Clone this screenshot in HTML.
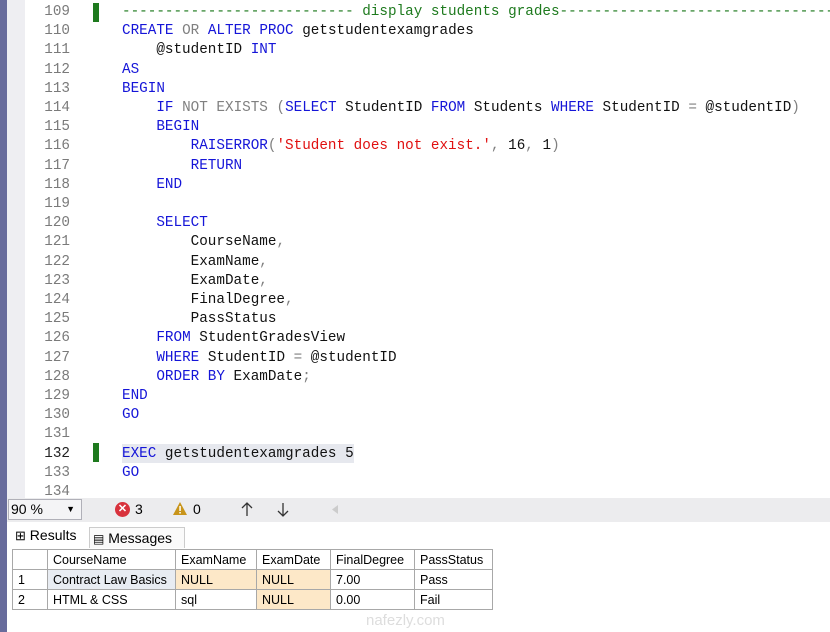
<!DOCTYPE html>
<html><head><meta charset="utf-8"><style>
*{margin:0;padding:0;box-sizing:border-box}
body{width:830px;height:632px;overflow:hidden;background:#fff;position:relative;font-family:"Liberation Sans",sans-serif}
#strip{position:absolute;left:0;top:0;width:7px;height:632px;background:#686c9c}
#gut{position:absolute;left:7px;top:0;width:18px;height:498px;background:#eeeef2}
.ln{position:absolute;left:25px;width:45px;text-align:right;font:14.3px "Liberation Mono",monospace;color:#7a7a7a;height:19px;line-height:19px}
.cd{position:absolute;left:122px;font:14.3px "Liberation Mono",monospace;color:#111;white-space:pre;height:19px;line-height:19px}
.k{color:#1515d8}.g{color:#808080}.c{color:#1e7a1e}.s{color:#e01010}
.mark{position:absolute;left:93px;width:6px;height:19px;background:#1e7a1e}
#tb{position:absolute;left:7px;top:498px;width:823px;height:24px;background:#ececee}
#zoom{position:absolute;left:8px;top:499px;width:74px;height:21px;border:1px solid #b0b0b8;background:#f4f4f6;font-size:14px;padding-left:2px;line-height:19px}
#res{position:absolute;left:7px;top:522px;width:823px;height:110px;background:#fff}
.tab{position:absolute;font-size:14px;line-height:22px}
table{position:absolute;left:12px;top:549px;border-collapse:collapse;font-size:12.5px}
td{border:1px solid #a8a8a8;height:20px;padding:0 5px;white-space:nowrap}
.y{background:#fde8c8}
</style></head><body>
<div id="strip"></div><div id="gut"></div>
<div class="mark" style="top:3px"></div>
<div class="mark" style="top:443px"></div>
<div style="position:absolute;left:122px;top:444px;width:232px;height:19px;background:#e6e8ee"></div>
<div id="code"></div>
<script>
var L=[
'<span class="c">--------------------------- display students grades----------------------------------</span>',
'<span class="k">CREATE</span> <span class="g">OR</span> <span class="k">ALTER PROC</span> getstudentexamgrades',
'    @studentID <span class="k">INT</span>',
'<span class="k">AS</span>',
'<span class="k">BEGIN</span>',
'    <span class="k">IF</span> <span class="g">NOT EXISTS (</span><span class="k">SELECT</span> StudentID <span class="k">FROM</span> Students <span class="k">WHERE</span> StudentID <span class="g">=</span> @studentID<span class="g">)</span>',
'    <span class="k">BEGIN</span>',
'        <span class="k">RAISERROR</span><span class="g">(</span><span class="s">\'Student does not exist.\'</span><span class="g">,</span> 16<span class="g">,</span> 1<span class="g">)</span>',
'        <span class="k">RETURN</span>',
'    <span class="k">END</span>',
'',
'    <span class="k">SELECT</span>',
'        CourseName<span class="g">,</span>',
'        ExamName<span class="g">,</span>',
'        ExamDate<span class="g">,</span>',
'        FinalDegree<span class="g">,</span>',
'        PassStatus',
'    <span class="k">FROM</span> StudentGradesView',
'    <span class="k">WHERE</span> StudentID <span class="g">=</span> @studentID',
'    <span class="k">ORDER BY</span> ExamDate<span class="g">;</span>',
'<span class="k">END</span>',
'<span class="k">GO</span>',
'',
'<span class="k">EXEC</span> getstudentexamgrades 5',
'<span class="k">GO</span>',
''];
var h='';
for(var i=0;i<26;i++){var t=3+19.2*i;
h+='<div class="ln" style="top:'+t+'px;'+(i==23?'color:#222':'')+'">'+(109+i)+'</div>';
h+='<div class="cd" style="top:'+t+'px">'+L[i]+'</div>';}
document.getElementById('code').innerHTML=h;
</script>
<div id="tb"></div>
<div id="zoom">90 %<span style="position:absolute;right:6px;top:0;font-size:9px">▼</span></div>
<div style="position:absolute;left:115px;top:502px;width:15px;height:15px;border-radius:50%;background:#d8323c;color:#fff;font-size:11px;line-height:15px;text-align:center;font-weight:bold">✕</div>
<div style="position:absolute;left:135px;top:500px;font-size:14px;line-height:19px">3</div>
<svg style="position:absolute;left:172px;top:501px" width="16" height="15"><path d="M8 1L15 14H1Z" fill="#c8941a"/><rect x="7.3" y="5" width="1.5" height="5" fill="#fff"/><rect x="7.3" y="11" width="1.5" height="1.5" fill="#fff"/></svg>
<div style="position:absolute;left:193px;top:500px;font-size:14px;line-height:19px">0</div>
<svg style="position:absolute;left:240px;top:502px" width="14" height="15"><path d="M7 1V14M2 6L7 1L12 6" stroke="#333" fill="none" stroke-width="1.3"/></svg>
<svg style="position:absolute;left:276px;top:502px" width="14" height="15"><path d="M7 1V14M2 9L7 14L12 9" stroke="#333" fill="none" stroke-width="1.3"/></svg>
<svg style="position:absolute;left:332px;top:505px" width="6" height="9"><path d="M6 0L0 4.5L6 9Z" fill="#ccc"/></svg>
<div id="res"></div>
<div style="position:absolute;left:89px;top:527px;width:96px;height:21px;border:1px solid #ccc;border-bottom:none;background:#fafafa"></div>
<div class="tab" style="left:15px;top:524px"><span style="font-size:13px">⊞</span> Results</div>
<div class="tab" style="left:93px;top:527px"><span style="font-size:12px">▤</span> Messages</div>
<table>
<tr><td style="width:35px"></td><td style="width:128px">CourseName</td><td style="width:81px">ExamName</td><td style="width:74px">ExamDate</td><td style="width:84px">FinalDegree</td><td style="width:78px">PassStatus</td></tr>
<tr><td>1</td><td style="background:#e8ecf2;border:1px dotted #333">Contract Law Basics</td><td class="y">NULL</td><td class="y">NULL</td><td>7.00</td><td>Pass</td></tr>
<tr><td>2</td><td>HTML &amp; CSS</td><td>sql</td><td class="y">NULL</td><td>0.00</td><td>Fail</td></tr>
</table>
<div style="position:absolute;left:366px;top:612px;font-size:15px;color:#ddd">nafezly.com</div>
</body></html>
